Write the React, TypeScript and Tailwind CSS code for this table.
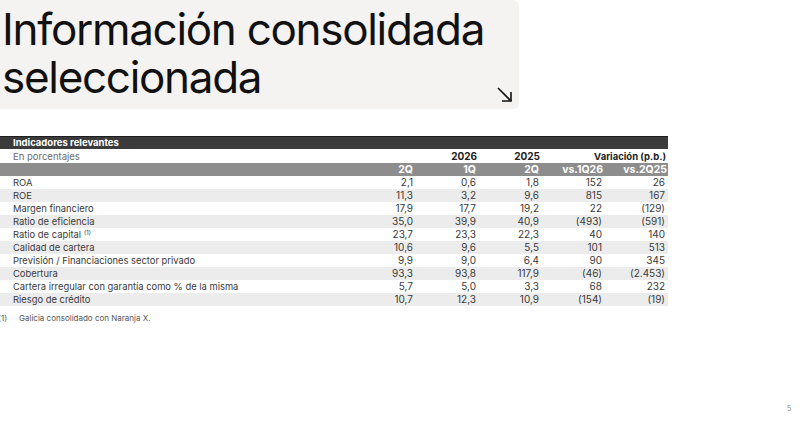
const rows: [string, string, string, string, string, string, boolean?][] = [
  ['ROA', '2,1', '0,6', '1,8', '152', '26'],
  ['ROE', '11,3', '3,2', '9,6', '815', '167'],
  ['Margen financiero', '17,9', '17,7', '19,2', '22', '(129)'],
  ['Ratio de eficiencia', '35,0', '39,9', '40,9', '(493)', '(591)'],
  ['Ratio de capital', '23,7', '23,3', '22,3', '40', '140', true],
  ['Calidad de cartera', '10,6', '9,6', '5,5', '101', '513'],
  ['Previsión / Financiaciones sector privado', '9,9', '9,0', '6,4', '90', '345'],
  ['Cobertura', '93,3', '93,8', '117,9', '(46)', '(2.453)'],
  ['Cartera irregular con garantía como % de la misma', '5,7', '5,0', '3,3', '68', '232'],
  ['Riesgo de crédito', '10,7', '12,3', '10,9', '(154)', '(19)'],
];

const grid = 'grid grid-cols-[355px_60px_63px_63px_63px_64px] w-[668px]';

export default function App() {
  return (
    <div className="relative w-[800px] h-[424px] bg-white overflow-hidden font-['Inter',sans-serif]">
      {/* Title card */}
      <div className="relative w-[519px] h-[109px] bg-[#f4f3f1] rounded-r-md pt-[5px] pl-[2px]">
        <h1 className="text-[44px] leading-[48px] font-normal text-[#111] tracking-[-1.3px]">
          Información consolidada
          <br />
          seleccionada
        </h1>
        <svg
          className="absolute right-[6px] bottom-[6px]"
          width="17"
          height="17"
          viewBox="0 0 17 17"
          fill="none"
          stroke="#111"
          strokeWidth="1.6"
        >
          <path d="M2 2 L15 15" />
          <path d="M15 6 L15 15 L6 15" />
        </svg>
      </div>

      {/* Table */}
      <div className="mt-[27px] text-[10px] leading-[13px]">
        <div className="w-[668px] h-[13px] bg-[#3b3b3b] border-t border-[#1e1e1e] pl-[13px] text-white font-bold text-[9.5px] leading-[12px]">
          Indicadores relevantes
        </div>
        <div className={`${grid} h-[14px] items-center text-[9.5px]`}>
          <div className="pl-[13px] text-[#6b6b6b]">En porcentajes</div>
          <div />
          <div className="text-right pr-[1px] font-bold text-[#222] text-[10px]">2026</div>
          <div className="text-right pr-[1px] font-bold text-[#222] text-[10px]">2025</div>
          <div className="col-span-2 text-right pr-[2px] font-bold text-[#222]">Variación (p.b.)</div>
        </div>
        <div className={`${grid} h-[13px] bg-[#8d8d8d] text-white font-bold text-[10.5px] leading-[13px]`}>
          <div />
          <div className="text-right pr-[2px]">2Q</div>
          <div className="text-right pr-[2px]">1Q</div>
          <div className="text-right pr-[2px]">2Q</div>
          <div className="text-right pr-[1px]">vs.1Q26</div>
          <div className="text-right pr-[1px]">vs.2Q25</div>
        </div>
        {rows.map(([label, a, b, c, d, e, note], i) => (
          <div
            key={label}
            className={`${grid} h-[13px] text-[#3a3a3a] ${i % 2 === 1 ? 'bg-[#ececec]' : 'bg-white'}`}
          >
            <div className="pl-[13px] whitespace-nowrap text-[9.4px]">
              {label}
              {note ? (
                <span className="relative -top-[3px] ml-[3px] text-[6px] leading-none">(1)</span>
              ) : null}
            </div>
            <div className="text-right pr-[2px]">{a}</div>
            <div className="text-right pr-[2px]">{b}</div>
            <div className="text-right pr-[2px]">{c}</div>
            <div className="text-right pr-[2px]">{d}</div>
            <div className="text-right pr-[3px]">{e}</div>
          </div>
        ))}
        <div className="flex mt-[6px] text-[8px] text-[#555]">
          <span className="w-[21px] -ml-[2px]">(1)</span>
          <span>Galicia consolidado con Naranja X.</span>
        </div>
      </div>

      <div className="absolute left-[787px] top-[404px] text-[7px] text-[#888]">5</div>
    </div>
  );
}
